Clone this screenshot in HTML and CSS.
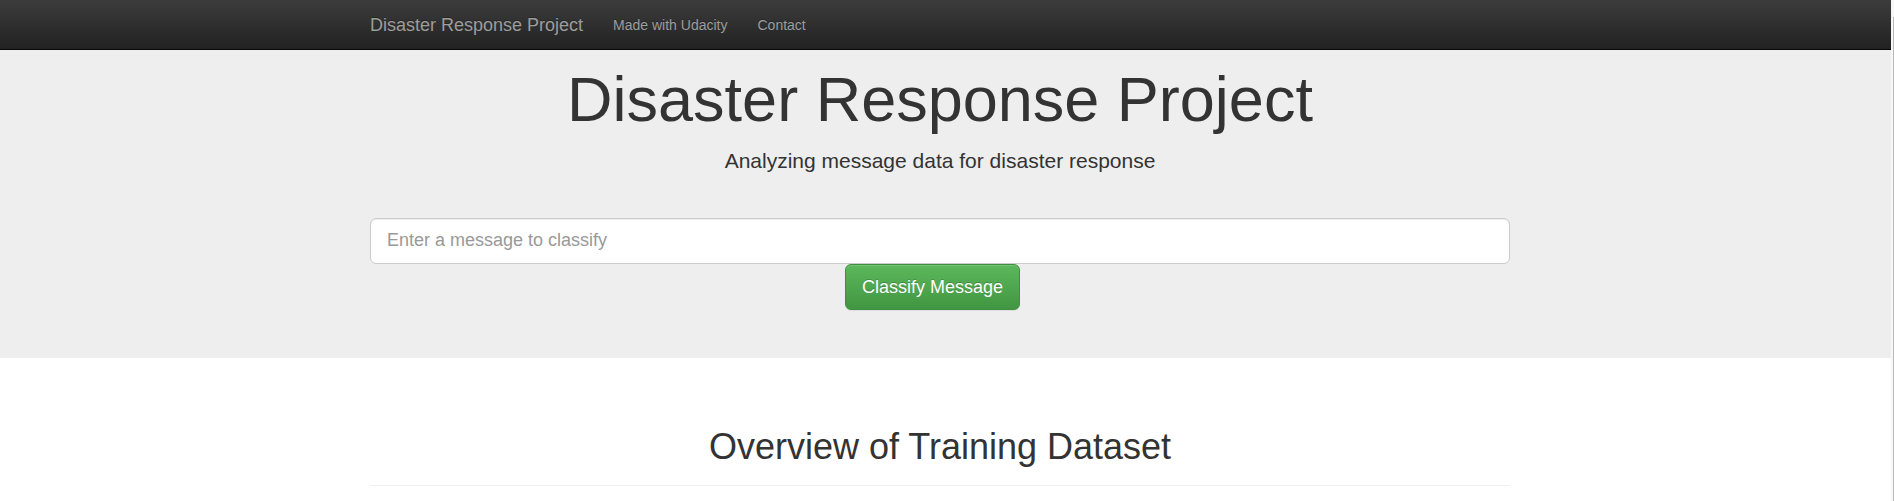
FILE: index.html
```html
<!DOCTYPE html>
<html lang="en">
<head>
<meta charset="utf-8">
<title>Disaster Response Project</title>
<link rel="stylesheet" href="styles.css">
</head>
<body>
<div class="viewport">
  <div class="page">
    <nav class="navbar">
      <div class="container nav-inner">
        <a class="navbar-brand" href="#">Disaster Response Project</a>
        <ul class="nav">
          <li><a href="#">Made with Udacity</a></li>
          <li><a href="#">Contact</a></li>
        </ul>
      </div>
    </nav>
    <div class="jumbotron">
      <div class="container">
        <h1 class="title">Disaster Response Project</h1>
        <p class="lead">Analyzing message data for disaster response</p>
        <form class="classify-form" action="#" method="get">
          <input type="text" class="form-control" name="query" placeholder="Enter a message to classify">
          <div class="btn-row">
            <button type="submit" class="btn-success">Classify Message</button>
          </div>
        </form>
      </div>
    </div>
    <div class="main">
      <div class="container">
        <div class="page-header">
          <h1 class="section-title">Overview of Training Dataset</h1>
        </div>
      </div>
    </div>
  </div>
  <div class="scrollbar"><div class="thumb"></div></div>
</div>
</body>
</html>
```

FILE: styles.css
```css
* { box-sizing: border-box; }

html, body {
  margin: 0;
  padding: 0;
  height: 100%;
}

body {
  font-family: "Liberation Sans", Arial, Helvetica, sans-serif;
  font-size: 14px;
  line-height: 1.42857;
  color: #333;
  background: #fff;
  overflow: hidden;
}

.viewport {
  display: flex;
  min-height: 100%;
}

.page {
  flex: 1;
  min-width: 0;
}

.scrollbar {
  width: 3px;
  background: #f7f7f7;
  padding-top: 17px;
}

.thumb {
  margin-left: 2px;
  width: 1px;
  height: 100%;
  background: #b9b9b9;
}

.container {
  width: 1170px;
  margin: 0 auto;
  padding: 0 15px;
}

/* navbar */
.navbar {
  height: 50px;
  padding-right: 11px;
  background: linear-gradient(to bottom, #3c3c3c 0, #222 100%);
  border-bottom: 1px solid #080808;
}

.nav-inner {
  display: flex;
  align-items: stretch;
  height: 49px;
}

.navbar-brand {
  display: block;
  margin-left: -15px;
  padding: 15px;
  font-size: 18px;
  line-height: 20px;
  height: 50px;
  color: #9d9d9d;
  text-decoration: none;
  text-shadow: 0 -1px 0 rgba(0, 0, 0, .25);
}

.nav {
  display: flex;
  list-style: none;
  margin: 0;
  padding: 0;
}

.nav a {
  display: block;
  padding: 15px;
  font-size: 14px;
  line-height: 20px;
  color: #9d9d9d;
  text-decoration: none;
  text-shadow: 0 -1px 0 rgba(0, 0, 0, .25);
}

/* jumbotron */
.jumbotron {
  background: #eee;
  padding: 15px 11px 48px 0;
}

.title {
  margin: 0;
  font-size: 63px;
  line-height: 69.3px;
  font-weight: 400;
  text-align: center;
  color: #333;
}

.lead {
  margin: 12px 0 0;
  font-size: 21px;
  line-height: 29.4px;
  font-weight: 400;
  text-align: center;
}

.classify-form {
  margin-top: 42px;
}

.form-control {
  display: block;
  width: 100%;
  height: 46px;
  padding: 10px 16px;
  font-family: inherit;
  font-size: 18px;
  line-height: 1.3333333;
  color: #555;
  background: #fff;
  border: 1px solid #ccc;
  border-radius: 6px;
  box-shadow: inset 0 1px 1px rgba(0, 0, 0, .075);
  outline: none;
}

.form-control::placeholder {
  color: #999;
  opacity: 1;
}

.btn-row {
  margin-left: 41.6667%;
}

.btn-success {
  display: inline-block;
  height: 46px;
  padding: 10px 16px;
  font-family: inherit;
  font-size: 18px;
  line-height: 1.3333333;
  color: #fff;
  background: linear-gradient(to bottom, #5cb85c 0, #419641 100%);
  border: 1px solid #3e8f3e;
  border-radius: 6px;
  text-shadow: 0 -1px 0 rgba(0, 0, 0, .2);
  box-shadow: inset 0 1px 0 rgba(255, 255, 255, .15), 0 1px 1px rgba(0, 0, 0, .075);
  cursor: pointer;
}

/* section */
.main {
  padding: 69px 11px 0 0;
}

.page-header {
  padding-bottom: 9px;
  border-bottom: 1px solid #eee;
}

.section-title {
  margin: 0 0 10px;
  font-size: 36px;
  line-height: 39.6px;
  font-weight: 400;
  text-align: center;
  color: #333;
}
```
